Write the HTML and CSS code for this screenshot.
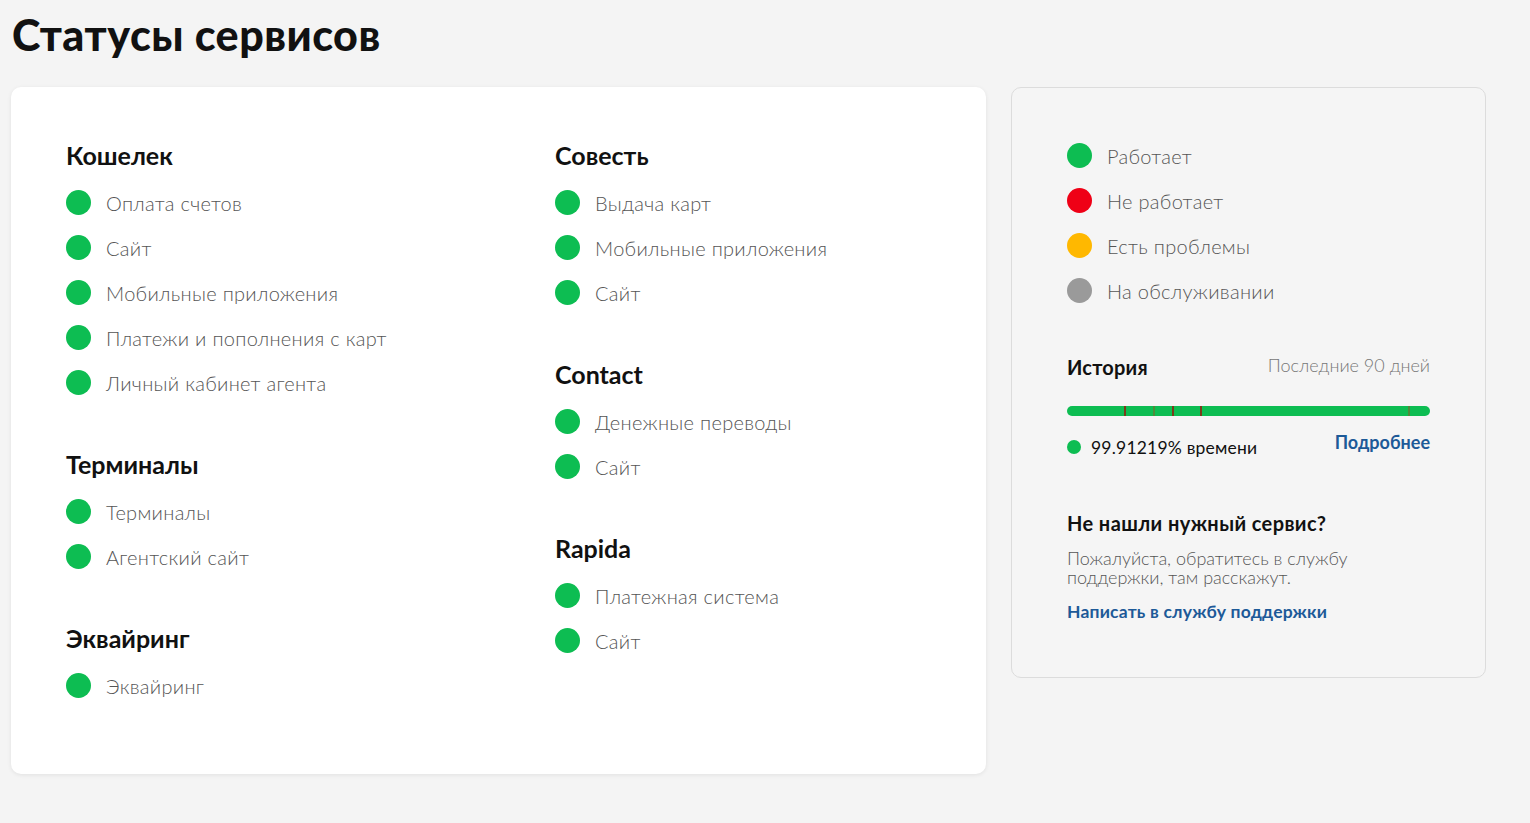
FILE: index.html
```html
<!DOCTYPE html>
<html lang="ru">
<head>
<meta charset="utf-8">
<title>Статусы сервисов</title>
<link rel="stylesheet" href="styles.css">
</head>
<body>
<div class="page">
  <h1 class="title">Статусы сервисов</h1>
  <div class="layout">
    <main class="services">
      <div class="col">
        <section class="group">
          <h2 class="group-title">Кошелек</h2>
          <ul class="items">
            <li class="item"><span class="dot green"></span>Оплата счетов</li>
            <li class="item"><span class="dot green"></span>Сайт</li>
            <li class="item"><span class="dot green"></span>Мобильные приложения</li>
            <li class="item"><span class="dot green"></span>Платежи и пополнения с карт</li>
            <li class="item"><span class="dot green"></span>Личный кабинет агента</li>
          </ul>
        </section>
        <section class="group">
          <h2 class="group-title">Терминалы</h2>
          <ul class="items">
            <li class="item"><span class="dot green"></span>Терминалы</li>
            <li class="item"><span class="dot green"></span>Агентский сайт</li>
          </ul>
        </section>
        <section class="group">
          <h2 class="group-title">Эквайринг</h2>
          <ul class="items">
            <li class="item"><span class="dot green"></span>Эквайринг</li>
          </ul>
        </section>
      </div>
      <div class="col">
        <section class="group">
          <h2 class="group-title">Совесть</h2>
          <ul class="items">
            <li class="item"><span class="dot green"></span>Выдача карт</li>
            <li class="item"><span class="dot green"></span>Мобильные приложения</li>
            <li class="item"><span class="dot green"></span>Сайт</li>
          </ul>
        </section>
        <section class="group">
          <h2 class="group-title">Contact</h2>
          <ul class="items">
            <li class="item"><span class="dot green"></span>Денежные переводы</li>
            <li class="item"><span class="dot green"></span>Сайт</li>
          </ul>
        </section>
        <section class="group">
          <h2 class="group-title">Rapida</h2>
          <ul class="items">
            <li class="item"><span class="dot green"></span>Платежная система</li>
            <li class="item"><span class="dot green"></span>Сайт</li>
          </ul>
        </section>
      </div>
    </main>
    <aside class="side">
      <ul class="legend">
        <li class="item"><span class="dot green"></span>Работает</li>
        <li class="item"><span class="dot red"></span>Не работает</li>
        <li class="item"><span class="dot yellow"></span>Есть проблемы</li>
        <li class="item"><span class="dot gray"></span>На обслуживании</li>
      </ul>
      <div class="history">
        <div class="history-head">
          <span class="history-title">История</span>
          <span class="history-range">Последние 90 дней</span>
        </div>
        <div class="bar">
          <span class="tick" style="left:15.7%"></span>
          <span class="tick light" style="left:23.7%"></span>
          <span class="tick" style="left:28.9%"></span>
          <span class="tick" style="left:36.6%"></span>
          <span class="tick light" style="left:93.9%"></span>
        </div>
        <div class="history-foot">
          <span class="uptime"><span class="mini-dot"></span>99.91219% времени</span>
          <a class="more" href="#">Подробнее</a>
        </div>
      </div>
      <div class="help">
        <h3 class="help-title">Не нашли нужный сервис?</h3>
        <p class="help-text">Пожалуйста, обратитесь в службу<br>поддержки, там расскажут.</p>
        <a class="help-link" href="#">Написать в службу поддержки</a>
      </div>
    </aside>
  </div>
</div>
</body>
</html>
```

FILE: styles.css
```css
* { box-sizing: border-box; }
html, body { margin: 0; padding: 0; }
body {
  background: #f4f4f4;
  font-family: "Lato", "Noto Sans", sans-serif;
  color: #111;
  width: 1530px;
  height: 823px;
  overflow: hidden;
}
.page { padding: 10px 0 0 11px; }
.title {
  margin: 0 0 0 1px;
  font-size: 43px;
  font-weight: 900;
  line-height: 50px;
  letter-spacing: 0.5px;
  color: #111;
}
.layout {
  display: flex;
  gap: 25px;
  margin-top: 27px;
  align-items: flex-start;
}
.services {
  width: 975px;
  height: 687px;
  background: #fff;
  border-radius: 10px;
  box-shadow: 0 1px 4px rgba(0,0,0,0.08);
  padding: 53px 55px;
  display: grid;
  grid-template-columns: 489px 1fr;
}
.group { margin-bottom: 44px; }
.group-title {
  margin: 0 0 9px;
  font-size: 25px;
  font-weight: 700;
  line-height: 31px;
  color: #111;
}
.items, .legend { list-style: none; margin: 0; padding: 0; }
.item {
  display: flex;
  align-items: center;
  height: 45px;
  font-size: 20px;
  font-weight: 300;
  letter-spacing: 0.3px;
  color: #555;
}
.dot {
  width: 25px;
  height: 25px;
  border-radius: 50%;
  margin-right: 15px;
  flex: none;
}
.green { background: #0dbd52; }
.red { background: #ef0016; }
.yellow { background: #ffb800; }
.gray { background: #9a9a9a; }

.side {
  width: 475px;
  height: 591px;
  border: 1px solid #dcdcdc;
  border-radius: 10px;
  background: #f5f5f5;
  padding: 45px 55px 0 55px;
}
.history { margin-top: 42px; }
.history-head {
  display: flex;
  justify-content: space-between;
  align-items: baseline;
}
.history-title { font-size: 20px; font-weight: 700; color: #111; letter-spacing: 0.2px; }
.history-range { font-size: 18px; font-weight: 300; color: #777; position: relative; top: -3px; }
.bar {
  position: relative;
  margin-top: 27px;
  height: 10px;
  border-radius: 5px;
  background: #0dbd52;
}
.tick {
  position: absolute;
  top: 0;
  width: 2px;
  height: 10px;
  background: #7a3a1a;
}
.tick.light { background: #4f8a3a; }
.history-foot {
  display: flex;
  justify-content: space-between;
  align-items: center;
  margin-top: 20px;
}
.uptime {
  display: flex;
  align-items: center;
  font-size: 17.5px;
  font-weight: 400;
  letter-spacing: 0.2px;
  color: #111;
}
.mini-dot {
  width: 14px;
  height: 14px;
  border-radius: 50%;
  background: #0dbd52;
  margin-right: 10px;
}
.more {
  font-size: 18px;
  font-weight: 700;
  color: #1d5a98;
  text-decoration: none;
  position: relative;
  top: -5px;
}
.help { margin-top: 53px; }
.help-title {
  margin: 0;
  font-size: 20px;
  font-weight: 700;
  letter-spacing: 0.4px;
  color: #111;
  line-height: 24px;
}
.help-text {
  margin: 14px 0 0;
  font-size: 18px;
  font-weight: 300;
  line-height: 19px;
  color: #555;
}
.help-link {
  display: inline-block;
  margin-top: 14px;
  font-size: 17.5px;
  font-weight: 700;
  letter-spacing: 0.2px;
  color: #1d5a98;
  text-decoration: none;
}
```
